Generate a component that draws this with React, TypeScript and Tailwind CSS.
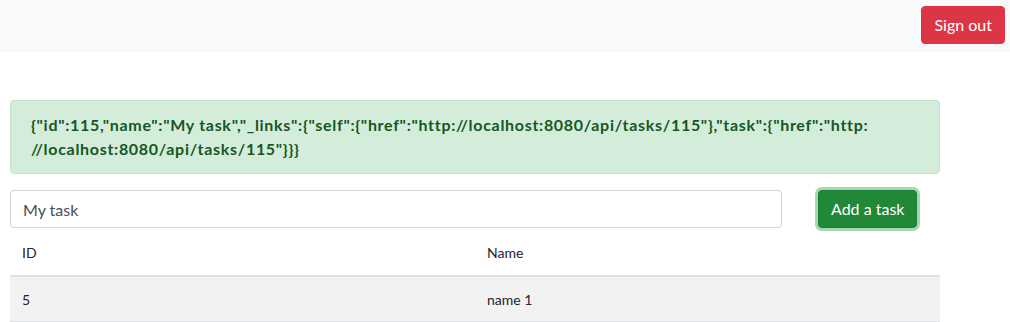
import React from 'react';

const tasks = [{ id: 5, name: 'name 1' }];

const App = () => {
  return (
    <div className="min-h-screen bg-white font-['Lato','Liberation_Sans',sans-serif] text-[#212529]">
      <nav className="flex h-[52px] items-start justify-end bg-[#f8f9fa] pt-[6px] pr-[5px]">
        <button className="h-[38px] rounded-[4px] border border-[#dc3545] bg-[#dc3545] px-3 text-base text-white">
          Sign out
        </button>
      </nav>

      <div className="w-[930px] ml-[10px] mt-[48px]">
        <div className="rounded-[4px] border border-[#c3e6cb] bg-[#d4edda] px-5 py-3 text-base font-bold leading-6 tracking-[0.7px] text-[#155724]">
          {'{"id":115,"name":"My task","_links":{"self":{"href":"http://localhost:8080/api/tasks/115"},"task":{"href":"http:'}
          <br />
          {'//localhost:8080/api/tasks/115"}}}'}
        </div>

        <div className="mt-4 flex items-center">
          <input
            className="h-[38px] w-[772px] rounded-[4px] border border-[#ced4da] px-3 text-base text-[#495057] outline-none"
            defaultValue="My task"
          />
          <button className="ml-[36px] h-[38px] rounded-[4px] border border-[#1e7e34] bg-[#218838] px-3 text-base text-white shadow-[0_0_0_3px_rgba(72,180,97,0.5)]">
            Add a task
          </button>
        </div>

        <table className="mt-[2px] w-full table-fixed text-sm">
          <thead>
            <tr className="border-b-2 border-[#dee2e6]">
              <th className="px-3 py-3 text-left font-normal leading-[21px]">ID</th>
              <th className="px-3 py-3 text-left font-normal leading-[21px]">Name</th>
            </tr>
          </thead>
          <tbody>
            {tasks.map((t) => (
              <tr key={t.id} className="border-b border-[#dee2e6] bg-[#f2f2f2]">
                <td className="px-3 pt-3 pb-[11px] leading-[21px]">{t.id}</td>
                <td className="px-3 pt-3 pb-[11px] leading-[21px]">{t.name}</td>
              </tr>
            ))}
          </tbody>
        </table>
      </div>
    </div>
  );
};

export default App;
